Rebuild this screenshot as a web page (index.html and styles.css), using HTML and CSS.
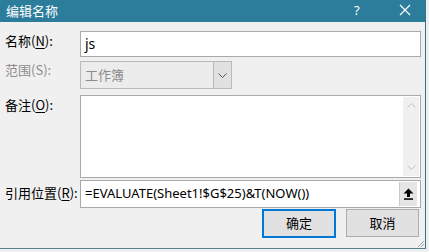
FILE: index.html
```html
<!DOCTYPE html>
<html>
<head>
<meta charset="utf-8">
<link rel="stylesheet" href="styles.css">
</head>
<body>
<div class="dialog">
  <div class="titlebar">
    <span class="title">编辑名称</span>
    <span class="help">?</span>
    <span class="close">
      <svg width="12" height="12" viewBox="0 0 12 12"><path d="M1 1L11 11M11 1L1 11" stroke="#fff" stroke-width="1.2" fill="none"/></svg>
    </span>
  </div>
  <div class="form">
    <div class="label lbl-name">名称(<u>N</u>):</div>
    <div class="field input name"><span class="val">js</span></div>

    <div class="label lbl-scope disabled">范围(S):</div>
    <div class="scope-wrap">
      <div class="field select"><span class="val">工作簿</span>
        <span class="drop"><svg width="9" height="5" viewBox="0 0 9 5"><path d="M0.5 0.5L4.5 4.5L8.5 0.5" stroke="#555" stroke-width="1" fill="none"/></svg></span>
      </div>
    </div>

    <div class="label lbl-comment">备注(<u>O</u>):</div>
    <div class="field textarea">
      <div class="vscroll">
        <svg width="9" height="5" viewBox="0 0 9 5"><path d="M0.5 4.5L4.5 0.5L8.5 4.5" stroke="#c2c2c2" stroke-width="1" fill="none"/></svg>
        <svg width="9" height="5" viewBox="0 0 9 5"><path d="M0.5 0.5L4.5 4.5L8.5 0.5" stroke="#c2c2c2" stroke-width="1" fill="none"/></svg>
      </div>
    </div>

    <div class="label lbl-ref">引用位置(<u>R</u>):</div>
    <div class="field input ref"><span class="val">=EVALUATE(Sheet1!$G$25)&amp;T(NOW())</span>
      <span class="refbtn"><svg width="11" height="12" viewBox="0 0 11 12"><path d="M5.5 0.5L10.5 5.5H7V9H4V5.5H0.5Z" fill="#000"/><rect x="1" y="10.3" width="9" height="1.5" fill="#000"/></svg></span>
    </div>
  </div>
  <div class="buttons">
    <div class="btn default">确定</div>
    <div class="btn">取消</div>
  </div>
  <svg class="grip" width="9" height="9" viewBox="0 0 9 9"><path d="M8 2L2 8M8 5L5 8M8 8L8 8" stroke="#9aa8ae" stroke-width="1"/></svg>
</div>
</body>
</html>
```

FILE: styles.css
```css
html, body {
  margin: 0;
  padding: 0;
  background: #eef1f2;
}
body {
  width: 429px;
  height: 252px;
  overflow: hidden;
  font-family: "Noto Sans", "Noto Sans CJK SC", sans-serif;
  font-size: 13px;
  color: #000;
}
.dialog {
  position: relative;
  width: 426px;
  height: 249px;
  box-sizing: border-box;
  background: #f0f0f0;
  border-right: 1px solid #3d6f82;
  border-bottom: 1px solid #5b7e8b;
}
.titlebar {
  height: 22px;
  background: #2b7d9b;
  color: #fff;
  display: flex;
  align-items: center;
  padding-left: 6px;
}
.title {
  font-family: "Noto Sans CJK SC", sans-serif;
  font-size: 13px;
  flex: 1;
  margin-top: -2px;
}
.help {
  font-family: "Noto Sans", sans-serif;
  font-size: 13px;
  width: 20px;
  margin-right: 25px;
  margin-top: -2px;
}
.close {
  width: 26px;
  display: flex;
  align-items: center;
  margin-top: -2px;
}
.form {
  display: grid;
  grid-template-columns: 80px 341px;
  grid-template-rows: 26px 28px 85px 26px;
  row-gap: 4px;
  margin-top: 9px;
}
.label {
  padding-left: 5px;
  font-family: "Noto Sans CJK SC", sans-serif;
  font-size: 13px;
  line-height: 16px;
  white-space: nowrap;
}
.label u { text-decoration-thickness: 1px; text-underline-offset: 2px; }
.lbl-name { padding-top: 2px; }
.lbl-scope { padding-top: 1px; }
.lbl-comment { padding-top: 4px; }
.lbl-ref { padding-top: 3px; }
.disabled { color: #8c8c8c; }
.field {
  box-sizing: border-box;
  background: #fff;
  border: 1px solid #a9a9a9;
  position: relative;
}
.input {
  display: flex;
  align-items: center;
}
.val {
  padding-left: 4px;
  margin-top: -2px;
}
.name .val { font-size: 14px; }
.scope-wrap { display: flex; }
.select {
  width: 152px;
  height: 28px;
  background: #ececec;
  border-color: #b9b9b9;
  display: flex;
  align-items: center;
  color: #8c8c8c;
}
.select .val {
  flex: 1;
  font-family: "Noto Sans CJK SC", sans-serif;
}
.drop {
  width: 18px;
  height: 26px;
  box-sizing: border-box;
  border-left: 1px solid #b9b9b9;
  background: #e1e1e1;
  display: flex;
  align-items: center;
  justify-content: center;
}
.textarea {
  margin-top: 2px;
  height: 83px;
  display: flex;
  justify-content: flex-end;
}
.vscroll {
  width: 16px;
  margin: 1px 1px 1px 0;
  background: #f0f0f0;
  display: flex;
  flex-direction: column;
  justify-content: space-between;
  align-items: center;
  padding: 6px 0;
}
.ref {
  margin-top: -2px;
  justify-content: space-between;
}
.refbtn {
  width: 18px;
  height: 24px;
  margin-right: 3px;
  box-sizing: border-box;
  background: #e5e5e5;
  border-left: 1px solid #c9c9c9;
  display: flex;
  align-items: center;
  justify-content: center;
}
.buttons {
  display: flex;
  gap: 10px;
  margin-top: 1px;
  padding-left: 262px;
}
.btn {
  box-sizing: border-box;
  width: 73px;
  height: 28px;
  background: #e1e1e1;
  border: 1px solid #adadad;
  display: flex;
  align-items: center;
  justify-content: center;
  font-family: "Noto Sans CJK SC", sans-serif;
  font-size: 13px;
  padding-bottom: 2px;
}
.btn.default {
  width: 74px;
  height: 29px;
  border: 2px solid #0078d7;
}
.grip {
  position: absolute;
  right: 0;
  bottom: 0;
}
```
